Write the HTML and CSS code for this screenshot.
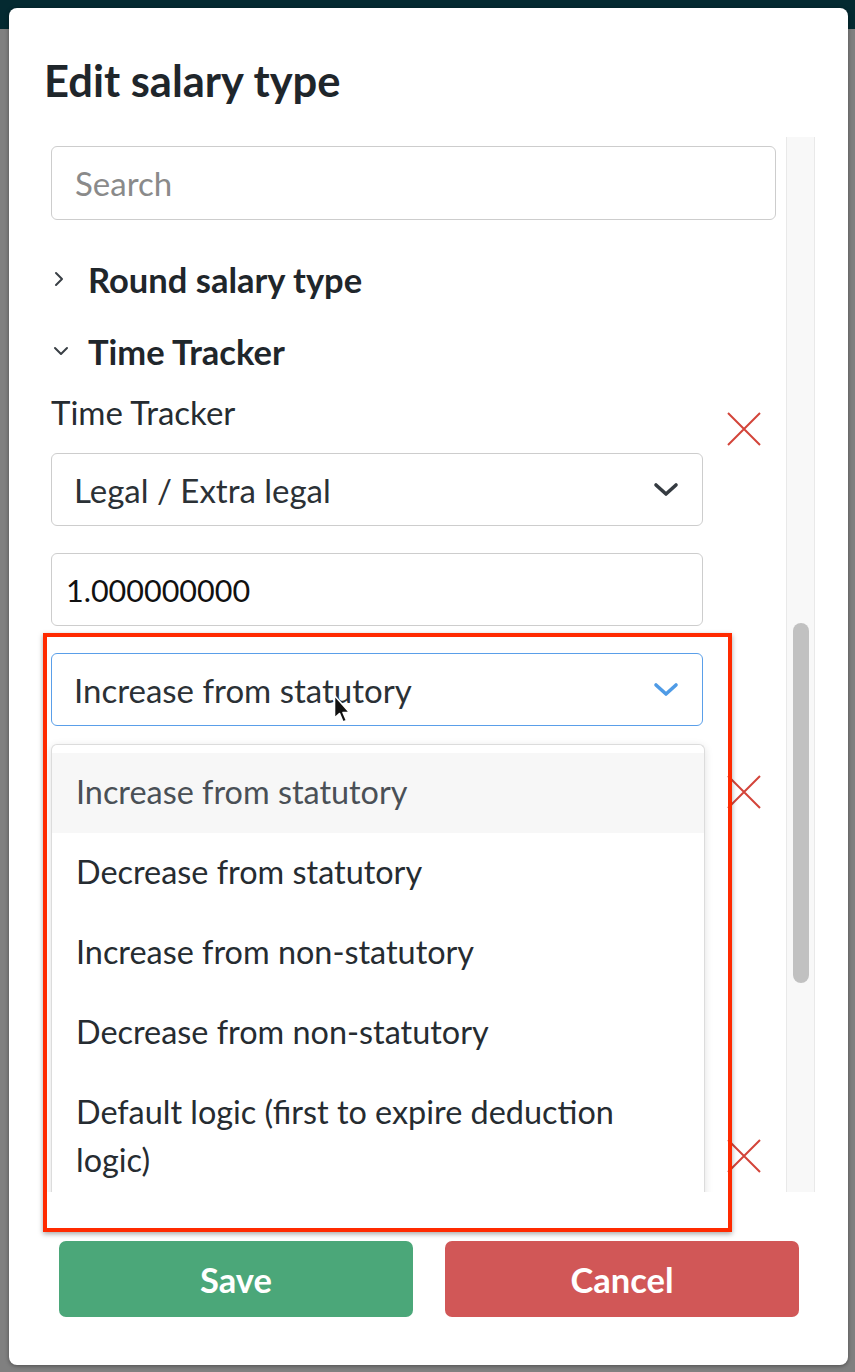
FILE: index.html
```html
<!DOCTYPE html>
<html lang="en">
<head>
<meta charset="utf-8">
<title>Edit salary type</title>
<link rel="stylesheet" href="styles.css">
</head>
<body>
<div class="modal">
  <h1 class="title">Edit salary type</h1>
  <div class="body">
    <div class="content">
      <div class="search">Search</div>
      <div class="section first">
        <span class="caret"><svg width="14" height="18" viewBox="0 0 14 18"><path d="M4 3 L10 9 L4 15" fill="none" stroke="#3a4046" stroke-width="2" stroke-linecap="round" stroke-linejoin="round"/></svg></span>
        <span>Round salary type</span>
      </div>
      <div class="section second">
        <span class="caret"><svg width="18" height="14" viewBox="0 0 18 14"><path d="M3 4 L9 10 L15 4" fill="none" stroke="#3a4046" stroke-width="2" stroke-linecap="round" stroke-linejoin="round"/></svg></span>
        <span>Time Tracker</span>
      </div>
      <div class="row">
        <div class="fields">
          <div class="label">Time Tracker</div>
          <div class="select"><span>Legal / Extra legal</span><svg class="chev" width="26" height="16" viewBox="0 0 26 16"><path d="M3 3 L13 12 L23 3" fill="none" stroke="#353b41" stroke-width="3.6" stroke-linecap="round" stroke-linejoin="round"/></svg></div>
          <div class="input">1.000000000</div>
          <div class="select focus"><span>Increase from statutory</span><svg class="chev" width="26" height="16" viewBox="0 0 26 16"><path d="M3 3 L13 12 L23 3" fill="none" stroke="#4f9be6" stroke-width="3.6" stroke-linecap="round" stroke-linejoin="round"/></svg></div>
        </div>
        <div class="remove"><svg width="34" height="34" viewBox="0 0 34 34"><path d="M1 1 L33 33 M33 1 L1 33" stroke="#d3443a" stroke-width="2"/></svg></div>
      </div>
      <div class="row next">
        <div class="fields spacer"></div>
        <div class="remove"><svg width="34" height="34" viewBox="0 0 34 34"><path d="M1 1 L33 33 M33 1 L1 33" stroke="#d3443a" stroke-width="2"/></svg></div>
      </div>
      <div class="row next">
        <div class="fields spacer"></div>
        <div class="remove"><svg width="34" height="34" viewBox="0 0 34 34"><path d="M1 1 L33 33 M33 1 L1 33" stroke="#d3443a" stroke-width="2"/></svg></div>
      </div>
      <ul class="menu">
        <li class="active">Increase from statutory</li>
        <li>Decrease from statutory</li>
        <li>Increase from non-statutory</li>
        <li>Decrease from non-statutory</li>
        <li>Default logic (first to expire deduction logic)</li>
      </ul>
    </div>
    <div class="track"><div class="thumb"></div></div>
  </div>
  <div class="footer">
    <button class="btn save">Save</button>
    <button class="btn cancel">Cancel</button>
  </div>
  <div class="annot"></div>
  <svg class="cursor" width="20" height="32" viewBox="0 0 20 32"><path d="M1.5 1.5 L1.5 24 L6.5 19.5 L10 28 L13.5 26.5 L10 18.5 L16.5 18.5 Z" fill="#111" stroke="#fff" stroke-width="1.6" stroke-linejoin="round"/></svg>
</div>
</body>
</html>
```
FILE: styles.css
```css
html, body {
  margin: 0;
}
body {
  width: 855px;
  height: 1372px;
  overflow: hidden;
  box-sizing: border-box;
  padding: 8px 0 0 9px;
  background: linear-gradient(#042a31 0, #042a31 29px, #808080 29px);
  font-family: Lato, "Open Sans", sans-serif;
  color: #262c31;
}
.modal {
  position: relative;
  width: 839px;
  height: 1357px;
  box-sizing: border-box;
  padding-top: 52px;
  background: #fff;
  border-radius: 8px;
  box-shadow: 0 1px 4px rgba(0, 0, 0, 0.4);
  display: flex;
  flex-direction: column;
}
.title {
  margin: 0 0 0 35px;
  font-size: 43.5px;
  line-height: 40px;
  font-weight: 700;
  color: #1f262b;
}
.body {
  margin-top: 37px;
  height: 1055px;
  overflow: hidden;
  display: flex;
  padding-left: 42px;
}
.content {
  position: relative;
  width: 725px;
  padding-top: 9px;
}
.search {
  height: 74px;
  box-sizing: border-box;
  border: 1.5px solid #cdcdcd;
  border-radius: 6px;
  padding-left: 23px;
  display: flex;
  align-items: center;
  font-size: 33px;
  color: #8a8a8a;
}
.section {
  display: flex;
  align-items: center;
  height: 40px;
  font-size: 34.5px;
  font-weight: 700;
  color: #1f262b;
}
.section.first { margin-top: 39px; }
.section.second { margin-top: 32px; }
.caret {
  width: 36px;
  display: flex;
  align-items: center;
  padding-left: 1px;
}
.row {
  display: flex;
  margin-top: 21px;
}
.row.next { margin-top: 29px; }
.fields {
  width: 652px;
  display: flex;
  flex-direction: column;
}
.fields.spacer { height: 335px; }
.label {
  height: 40px;
  line-height: 40px;
  font-size: 33px;
  color: #262c31;
}
.select, .input {
  height: 73px;
  box-sizing: border-box;
  border: 1.5px solid #cdcdcd;
  border-radius: 6px;
  display: flex;
  align-items: center;
  font-size: 33px;
}
.select {
  margin-top: 21px;
  padding: 0 23px 0 22px;
  justify-content: space-between;
  color: #2b3136;
}
.input {
  margin-top: 27px;
  padding-left: 14px;
  color: #111;
  font-size: 30.5px;
}
.select.focus {
  margin-top: 27px;
  border-color: #5a9fe9;
}
.chev { display: block; }
.remove {
  margin: 20px 0 0 24px;
  width: 34px;
  height: 34px;
}
.remove svg { display: block; }
.menu {
  position: absolute;
  top: 607px;
  left: 0;
  width: 654px;
  margin: 0;
  padding: 8px 0 0;
  list-style: none;
  box-sizing: border-box;
  background: #fff;
  border: 1px solid #dcdcdc;
  border-bottom: none;
  border-radius: 6px 6px 0 0;
  box-shadow: 0 2px 8px rgba(0, 0, 0, 0.12);
  font-size: 32.4px;
  color: #262c31;
}
.menu li {
  padding: 15px 24px 17px;
  line-height: 48px;
}
.menu li.active {
  background: #f7f7f7;
  color: #4a5056;
}
.track {
  margin-left: 10px;
  width: 27px;
  border-left: 1px solid #e9e9e9;
  border-right: 1px solid #e9e9e9;
  background: #f8f8f8;
  padding-top: 486px;
}
.thumb {
  margin-left: 6px;
  width: 16px;
  height: 360px;
  border-radius: 8px;
  background: #c1c1c1;
}
.footer {
  margin-top: 49px;
  padding-left: 50px;
  display: flex;
  gap: 32px;
}
.btn {
  width: 354px;
  height: 76px;
  border: none;
  border-radius: 7px;
  font-family: Lato, "Open Sans", sans-serif;
  font-size: 34.5px;
  font-weight: 700;
  color: #fff;
}
.save { background: #4ba779; }
.cancel { background: #d15757; }
.annot {
  position: absolute;
  left: 34px;
  top: 625px;
  width: 689px;
  height: 599px;
  box-sizing: border-box;
  border: 4px solid #ff2a00;
  box-shadow: 0 2px 5px rgba(0, 0, 0, 0.35);
}
.cursor {
  position: absolute;
  left: 324px;
  top: 686px;
}
```
